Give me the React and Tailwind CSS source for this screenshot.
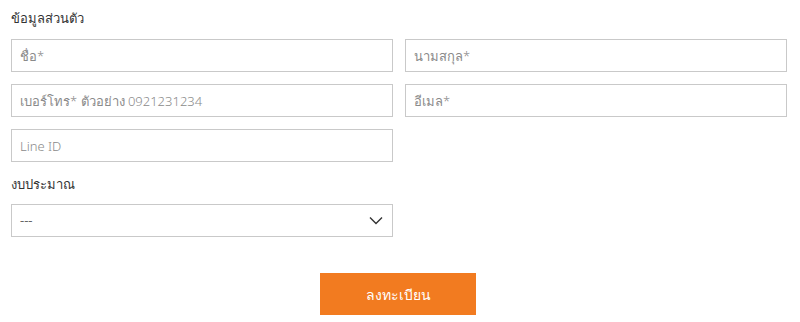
function TextField({ placeholder }) {
    return (
        <input
            type="text"
            placeholder={placeholder}
            className="w-full h-[33px] px-[8px] border border-[#c9c9c9] bg-white text-[13px] font-light text-[#333] placeholder:text-[#8a8a8a] focus:outline-none"
        />
    );
}

function App() {
    return (
        <div className="w-[800px] h-[322px] bg-white font-['Noto_Sans','Liberation_Sans',sans-serif]">
            <div className="w-[776px] ml-[11px]">
                {/* Header */}
                <div className="h-[39px] pt-[7px] text-[13px] font-light leading-[22px] text-[#333]">
                    ข้อมูลส่วนตัว
                </div>

                {/* Fields */}
                <div className="grid grid-cols-2 gap-x-[12px] gap-y-[12px]">
                    <TextField placeholder="ชื่อ*" />
                    <TextField placeholder="นามสกุล*" />
                    <TextField placeholder="เบอร์โทร* ตัวอย่าง 0921231234" />
                    <TextField placeholder="อีเมล*" />
                    <TextField placeholder="Line ID" />
                </div>

                {/* Budget */}
                <div className="h-[42px] pt-[11px] text-[13px] font-light leading-[22px] text-[#333]">
                    งบประมาณ
                </div>
                <div className="w-[382px] h-[33px] px-[8px] border border-[#c9c9c9] flex items-center justify-between text-[13px] text-[#666]">
                    <span>---</span>
                    <svg width="14" height="9" viewBox="0 0 14 9" className="mr-[1px]">
                        <polyline points="1,1.5 7,7.5 13,1.5" fill="none" stroke="#333" strokeWidth="1.4" />
                    </svg>
                </div>

                {/* Submit */}
                <div className="flex justify-center pt-[36px]">
                    <button
                        type="submit"
                        className="w-[156px] h-[42px] bg-[#f27b20] text-white text-[14px] font-light -translate-x-[1px]"
                    >
                        ลงทะเบียน
                    </button>
                </div>
            </div>
        </div>
    );
}

export default App;
